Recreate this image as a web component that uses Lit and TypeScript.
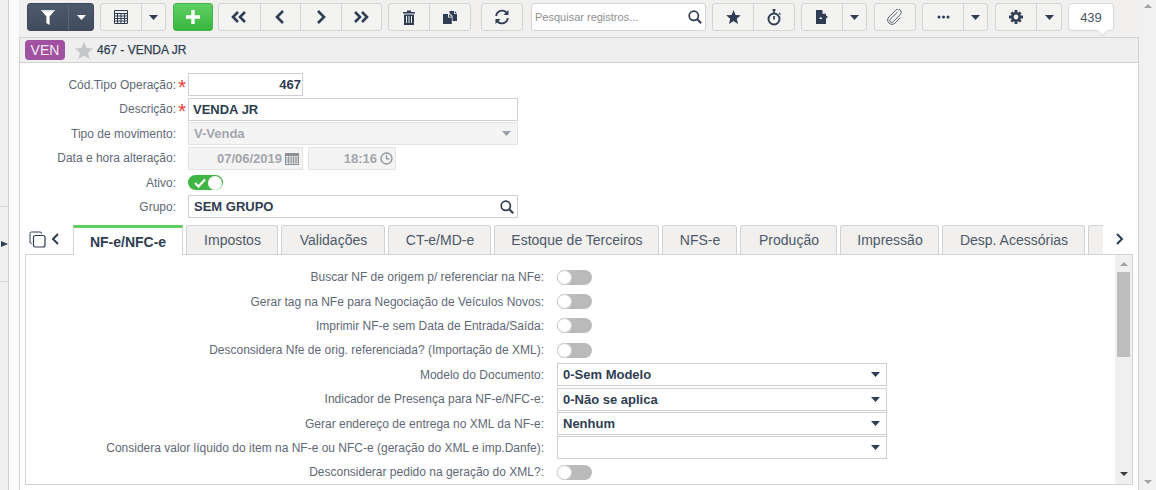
import { LitElement, html, css, svg } from "lit";
import { customElement } from "lit/decorators.js";

const INK = "#2f3d52";
const caret = html`<svg class="caret" width="9" height="5" viewBox="0 0 9 5"><path d="M0 0h9L4.5 5z" fill="currentColor"/></svg>`;
const ic = (w: number, h: number, vb: string, body: unknown) =>
  html`<svg width=${w} height=${h} viewBox=${vb} fill="none">${body}</svg>`;

const icons = {
  filter: ic(14, 15, "0 0 14 15", svg`<path d="M0 0h14L8.600 6.500V15L5.400 13V6.500z" fill="#fff"/><path d="M0 0h14l-1.500 1.800h-11z" fill="#dfe2e6"/>`),
  list: ic(14, 14, "0 0 14 14", svg`<path d="M.5.5h13v13H.5zM.5 3.500h13M.5 6h13M.5 8.500h13M.5 11h13M3.500 3.500v10M7 3.500v10M10.500 3.500v10" stroke="${INK}"/>`),
  plus: ic(14, 14, "0 0 14 14", svg`<path d="M5.300 0h3.400v5.300H14v3.400H8.700V14H5.300V8.700H0V5.300h5.300z" fill="#fff"/>`),
  first: ic(16, 12, "0 0 16 12", svg`<path d="M7 1 2 6l5 5M14 1 9 6l5 5" stroke="${INK}" stroke-width="2.600"/>`),
  prev: ic(10, 14, "0 0 10 14", svg`<path d="M8 1 2 7l6 6" stroke="${INK}" stroke-width="2.600"/>`),
  next: ic(10, 14, "0 0 10 14", svg`<path d="m2 1 6 6-6 6" stroke="${INK}" stroke-width="2.600"/>`),
  last: ic(16, 12, "0 0 16 12", svg`<path d="m2 1 5 5-5 5M9 1l5 5-5 5" stroke="${INK}" stroke-width="2.600"/>`),
  trash: ic(12, 15, "0 0 12 15", svg`<path d="M4 2V.500h4V2h4v1.500H0V2zM1 4.500h10V15H1z" fill="${INK}"/><path d="M3.500 6v7M6 6v7M8.500 6v7" stroke="#f3f3f3"/>`),
  copy: ic(14, 13, "0 0 14 13", svg`<path d="M6.500 0h4.500v3h3v7H9.500V5L6.500 2z" fill="${INK}"/><path d="M11.800 0 14 2.300h-2.200z" fill="${INK}"/><path d="M0 3h5v3.500h3.800V13H0z" fill="${INK}"/><path d="M6 3l2.800 2.700H6z" fill="${INK}"/>`),
  refresh: ic(16, 16, "0 0 16 16", svg`<path d="M2.200 7A6 6 0 0 1 12.500 3.500M13.800 9A6 6 0 0 1 3.500 12.500" stroke="${INK}" stroke-width="1.900"/><path d="M14.500 1v5h-5zM1.500 15v-5h5z" fill="${INK}"/>`),
  search: ic(14, 14, "0 0 14 14", svg`<circle cx="5.800" cy="5.800" r="4.600" stroke="${INK}" stroke-width="1.700"/><path d="m9.200 9.200 4 4" stroke="${INK}" stroke-width="2"/>`),
  star: ic(15, 14, "0 0 15 14", svg`<path d="m7.500 0 2 4.900 5.300.4-4 3.400 1.200 5.200-4.500-2.800L3 13.900l1.200-5.200-4-3.400 5.300-.4z" fill="${INK}"/>`),
  timer: ic(15, 17, "0 0 15 17", svg`<circle cx="7" cy="10" r="5.500" stroke="${INK}" stroke-width="1.900"/><path d="M5.500.900h3M7 1v3M7 7v3.500" stroke="${INK}" stroke-width="1.700"/><path d="m12 4 1.500 1.500" stroke="${INK}" stroke-width="1.300"/>`),
  doc: ic(12, 14, "0 0 12 14", svg`<path d="M0 0h6l4 4v1.500L12 7l-2 1.500V14H0z" fill="${INK}"/><path d="M3.500 7.500h2.500V9H3.500z" fill="#f3f3f3"/><path d="M6.500 0v3.700H10z" fill="#f3f3f3"/>`),
  clip: ic(16, 16, "0 0 16 16", svg`<path d="M10.500 3 3.300 10.200a1.900 1.900 0 0 0 2.700 2.700l7.500-7.600a3.200 3.200 0 0 0-4.500-4.500L1.900 8a4.300 4.300 0 0 0 6.100 6.100l5.500-5.500" stroke="#59626f" stroke-width="1"/>`),
  dots: ic(13, 4, "0 0 13 4", svg`<circle cx="2" cy="2" r="1.500" fill="${INK}"/><circle cx="6.500" cy="2" r="1.500" fill="${INK}"/><circle cx="11" cy="2" r="1.500" fill="${INK}"/>`),
  gear: ic(14, 14, "0 0 15 15", svg`<circle cx="7.500" cy="7.500" r="3.900" stroke="${INK}" stroke-width="2.700"/><path d="M6 0h3v3H6zM6 12h3v3H6zM0 6h3v3H0zM12 6h3v3h-3zM1.500 3.600l2-2 2 2-2 2zM9.500 3.600l2-2 2 2-2 2zM1.500 11.400l2-2 2 2-2 2zM9.500 11.400l2-2 2 2-2 2z" fill="${INK}"/>`),
  cal: ic(14, 13, "0 0 14 13", svg`<path d="M0 1h14v12H0z" fill="#8c9095"/><path d="M1 4h12v8H1z" fill="#f3f3f3"/><path d="M1 6h12M1 8h12M1 10h12M3.500 4v8M6 4v8M8.500 4v8M11 4v8" stroke="#8c9095" stroke-width=".8"/>`),
  clock: ic(13, 13, "0 0 13 13", svg`<circle cx="6.500" cy="6.500" r="5.500" stroke="#8c9095" stroke-width="1.300"/><path d="M6.500 3v3.800H9.500" stroke="#8c9095" stroke-width="1.200"/>`),
  check: ic(12, 10, "0 0 12 10", svg`<path d="m1 5 3.500 3.500L11 1.500" stroke="#fff" stroke-width="2.200"/>`),
  pages: ic(17, 17, "0 0 17 17", svg`<rect x="4.500" y="4.500" width="11.500" height="11.500" rx="2" stroke="${INK}" stroke-width="1.200"/><path d="M3 12.500H2.500A1.500 1.500 0 0 1 1 11V2.500A1.500 1.500 0 0 1 2.500 1H11a1.500 1.500 0 0 1 1.500 1.500V3" stroke="${INK}" stroke-width="1"/>`),
  bigStar: ic(18, 17, "0 0 18 17", svg`<path d="m9 0 2.500 6 6.500.5-5 4.300 1.600 6.200L9 13.700 3.400 17 5 10.800 0 6.500 6.500 6z" fill="#c4c5c7"/>`),
};

const tabs: [string, number][] = [
  ["Impostos", 92], ["Validações", 104], ["CT-e/MD-e", 103], ["Estoque de Terceiros", 165],
  ["NFS-e", 75], ["Produção", 97], ["Impressão", 99], ["Desp. Acessórias", 143],
];

type Row = { label: string; select?: string };
const rows: Row[] = [
  { label: "Buscar NF de origem p/ referenciar na NFe:" },
  { label: "Gerar tag na NFe para Negociação de Veículos Novos:" },
  { label: "Imprimir NF-e sem Data de Entrada/Saída:" },
  { label: "Desconsidera Nfe de orig. referenciada? (Importação de XML):" },
  { label: "Modelo do Documento:", select: "0-Sem Modelo" },
  { label: "Indicador de Presença para NF-e/NFC-e:", select: "0-Não se aplica" },
  { label: "Gerar endereço de entrega no XML da NF-e:", select: "Nenhum" },
  { label: "Considera valor líquido do item na NF-e ou NFC-e (geração do XML e imp.Danfe):", select: "" },
  { label: "Desconsiderar pedido na geração do XML?:" },
];

@customElement("app-root")
export class AppRoot extends LitElement {
  static styles = css`
    :host { display: block; width: 1156px; height: 490px; overflow: hidden; background: #fff;
      font-family: "Liberation Sans", Arial, sans-serif; font-size: 12px; color: #2f3d52; }
    .page { display: flex; height: 490px; }
    .rail { width: 8px; flex: none; border-right: 1px solid #d0d0d0; background: #f0f0f0; display: flex; flex-direction: column; box-sizing: content-box; }
    .rail-a { height: 206px; border-bottom: 1px solid #d9d9d9; }
    .rail-b { height: 74px; border-bottom: 1px solid #d9d9d9; display: flex; align-items: center; }
    .rail-b i { width: 0; height: 0; margin-left: 1px; border-left: 7px solid #2f3d52; border-top: 3.500px solid transparent; border-bottom: 3.500px solid transparent; }
    .gutter { width: 10px; flex: none; background: #fbfbfb; }
    .main { width: 1120px; flex: none; display: flex; flex-direction: column; background: #f1f0ee; }
    .outer-bar { flex: 1; background: #f1f1f1; display: flex; flex-direction: column; justify-content: space-between; align-items: center; padding: 4px 0 6px; }
    .up { width: 0; height: 0; border-left: 4px solid transparent; border-right: 4px solid transparent; border-bottom: 4px solid #a3a3a3; }
    .down { width: 0; height: 0; border-left: 4px solid transparent; border-right: 4px solid transparent; border-top: 4px solid #a3a3a3; }

    .toolbar { height: 37px; flex: none; display: flex; padding: 3px 0 0 8px; box-sizing: border-box; align-items: flex-start; position: relative; }
    .grp { display: flex; height: 28px; border: 1px solid #d4d4d4; border-radius: 3px; box-sizing: border-box; background: #f3f3f2; }
    .grp > span { display: flex; align-items: center; justify-content: center; border-left: 1px solid #d4d4d4; color: #2f3d52; box-sizing: border-box; }
    .grp > span:first-child { border-left: 0; }
    .dark { background: linear-gradient(#4d5a6c, #414d5f); border-color: #3d4859; }
    .dark > span { border-color: #59667a; color: #fff; }
    .green { background: linear-gradient(#5fcf63, #38b53d); border-color: #3fb544; }
    .search { width: 175px; height: 28px; margin-left: 8px; background: #fff; border: 1px solid #d4d4d4; border-radius: 3px; box-sizing: border-box; display: flex; align-items: center; justify-content: space-between; padding: 0 3px 0 3px; color: #8f8f8f; font-size: 11px; }
    .count { margin-left: 6px; width: 46px; height: 28px; background: #fff; border: 1px solid #d8d8d8; border-radius: 4px; box-sizing: border-box; display: flex; align-items: center; justify-content: center; font-size: 13px; color: #4a5566; position: relative; }
    .count::after { content: ""; position: absolute; left: 29px; bottom: -5px; width: 8px; height: 8px; background: #fff; border-right: 1px solid #d8d8d8; border-bottom: 1px solid #d8d8d8; transform: rotate(45deg) scale(.9); }
    .ml5 { margin-left: 5px; } .ml6 { margin-left: 6px; } .ml7 { margin-left: 7px; } .ml10 { margin-left: 10px; }

    .panel { flex: 1; min-height: 0; display: flex; flex-direction: column; border: 1px solid #d2d2d2; border-bottom: 0; background: #fff; }
    .title { height: 24px; flex: none; background: #efefef; border-bottom: 1px solid #d2d2d2; box-sizing: content-box; display: flex; align-items: center; padding-left: 5px; }
    .badge { width: 40px; height: 20px; border-radius: 4px; background: #a0519f; color: #f4e9f4; font-size: 14px; display: flex; align-items: center; justify-content: center; }
    .title svg { margin-left: 10px; }
    .title b { margin-left: 4px; font-size: 12px; font-weight: normal; -webkit-text-stroke: .25px #2f3d52; color: #2f3d52; }

    .form { display: flex; flex-direction: column; padding-top: 9.750px; height: 152.250px; flex: none; box-sizing: content-box; }
    .f { height: 24.400px; display: flex; align-items: center; flex: none; }
    .f label { width: 156px; text-align: right; color: #5f6875; font-size: 12px; white-space: nowrap; flex: none; }
    .req { width: 12px; height: 12px; flex: none; color: #e2432f; font-size: 21px; line-height: 16px; padding-left: 2px; box-sizing: border-box; overflow: visible; }
    .inp { height: 23px; box-sizing: border-box; border: 1px solid #d0d0d0; display: flex; align-items: center; font-weight: bold; font-size: 13px; color: #2f3d52; padding: 0 4px; justify-content: space-between; flex: none; }
    .w115 { width: 115px; justify-content: flex-end; padding-right: 1px; }
    .w330 { width: 330px; }
    .dis { background: #f4f4f4; border-color: #e3e3e3; color: #a2a6ac; }
    .pad4 { padding-left: 5px; }
    .pr6 { padding-right: 6px; }
    .pr3 { padding-right: 3px; }
    .date { gap: 3px; padding-right: 3px; }
    .time { width: 88px; margin-left: 5px; justify-content: flex-end; gap: 3px; padding-right: 2px; }
    .toggle { width: 35px; height: 15px; border-radius: 8px; background: #3fb544; box-sizing: border-box; position: relative; display: flex; align-items: center; padding-left: 6px; }
    .toggle::after { content: ""; position: absolute; right: 1px; top: .5px; width: 14px; height: 14px; border-radius: 50%; background: #fff; }
    .off { background: #bababa; }
    .off::after { right: auto; left: 0; top: 0; width: 15px; height: 15px; box-sizing: border-box; border: 1px solid #d0d0d0; }

    .tabbar { height: 29px; flex: none; display: flex; align-items: stretch; position: relative; }
    .tools { width: 53px; flex: none; display: flex; align-items: flex-start; padding: 6px 0 0 9px; box-sizing: border-box; gap: 5px; }
    .tools .chev { margin-top: 2px; }
    .tab { box-sizing: border-box; margin-right: 3px; border: 1px solid #d2d2d2; border-bottom: 0; border-radius: 3px 3px 0 0; background: #f1f0ee; display: flex; align-items: center; justify-content: center; font-size: 14px; color: #4d5868; flex: none; padding-left: 1px; }
    .tab.active { width: 110px; background: #fff; border: 0; border-left: 1px solid #d2d2d2; border-right: 1px solid #d2d2d2; border-top: 3px solid #5fcf63; border-radius: 0; color: #2f3d52; font-weight: bold; height: 30px; z-index: 1; padding: 1px 0 0; }
    .stub { width: 15px; margin: 0; border-right: 0; border-radius: 3px 0 0 0; }
    .right-chev { margin-left: 12px; margin-top: 8px; align-self: flex-start; }

    .box { margin-left: 5px; width: 1108px; height: 231px; box-sizing: border-box; border: 1px solid #d2d2d2; display: flex; flex: none; }
    .scroll { flex: 1; padding-top: 10px; box-sizing: border-box; min-width: 0; overflow: hidden; }
    .r { height: 24.400px; display: flex; align-items: center; }
    .r label { width: 518px; text-align: right; white-space: nowrap; flex: none; color: #5f6875; font-size: 12px; }
    .r .ctl { margin-left: 13px; flex: none; display: flex; align-items: center; }
    .sel { width: 330px; height: 23px; box-sizing: border-box; border: 1px solid #d0d0d0; font-weight: bold; font-size: 13px; color: #2f3d52; display: flex; align-items: center; justify-content: space-between; padding: 0 6px 0 5px; }
    .inner-bar { width: 17px; flex: none; background: #f0f0f0; display: flex; flex-direction: column; align-items: center; padding: 7px 0 8px; box-sizing: border-box; }
    .thumb { width: 13px; height: 85px; background: #bdbdbd; margin-top: 6px; margin-bottom: auto; }
    .inner-bar .down { border-top-color: #3a3a3a; }
    .caret { display: block; }
    .grey { color: #9aa0a8; }
  `;

  render() {
    return html`<div class="page">
      <div class="rail"><div class="rail-a"></div><div class="rail-b"><i></i></div></div>
      <div class="gutter"></div>
      <div class="main">
        <div class="toolbar">
          <div class="grp dark">${this.cell(40, icons.filter)}${this.cell(25, caret)}</div>
          <div class="grp ml6">${this.cell(40, icons.list)}${this.cell(24, caret)}</div>
          <div class="grp green ml7">${this.cell(38, icons.plus)}</div>
          <div class="grp ml5">${this.cell(40.5, icons.first)}${this.cell(40.5, icons.prev)}${this.cell(40.5, icons.next)}${this.cell(40.5, icons.last)}</div>
          <div class="grp ml6">${this.cell(40, icons.trash)}${this.cell(41, icons.copy)}</div>
          <div class="grp ml10">${this.cell(40, icons.refresh)}</div>
          <div class="search"><span>Pesquisar registros...</span>${icons.search}</div>
          <div class="grp ml6">${this.cell(40, icons.star)}${this.cell(41, icons.timer)}</div>
          <div class="grp ml6">${this.cell(40, icons.doc)}${this.cell(24, caret)}</div>
          <div class="grp ml7">${this.cell(40, icons.clip)}</div>
          <div class="grp ml6">${this.cell(40, icons.dots)}${this.cell(24, caret)}</div>
          <div class="grp ml7">${this.cell(40, icons.gear)}${this.cell(25, caret)}</div>
          <div class="count">439</div>
        </div>
        <div class="panel">
          <div class="title"><span class="badge">VEN</span>${icons.bigStar}<b>467 - VENDA JR</b></div>
          <div class="form">
            <div class="f"><label>Cód.Tipo Operação:</label><span class="req">*</span><div class="inp w115">467</div></div>
            <div class="f"><label>Descrição:</label><span class="req">*</span><div class="inp w330">VENDA JR</div></div>
            <div class="f"><label>Tipo de movimento:</label><span class="req"></span><div class="inp w330 dis pad4 pr6"><span>V-Venda</span><span class="grey">${caret}</span></div></div>
            <div class="f"><label>Data e hora alteração:</label><span class="req"></span><div class="inp dis w115 date">07/06/2019 ${icons.cal}</div><div class="inp dis time">18:16 ${icons.clock}</div></div>
            <div class="f"><label>Ativo:</label><span class="req"></span><div class="toggle">${icons.check}</div></div>
            <div class="f"><label>Grupo:</label><span class="req"></span><div class="inp w330 pad4 pr3"><span>SEM GRUPO</span>${icons.search}</div></div>
          </div>
          <div class="tabbar">
            <div class="tools">${icons.pages}<svg class="chev" width="9" height="12" viewBox="0 0 9 12" fill="none"><path d="M7 1 2 6l5 5" stroke="#2f3d52" stroke-width="2"/></svg></div>
            <div class="tab active">NF-e/NFC-e</div>
            ${tabs.map(([t, w]) => html`<div class="tab" style="width:${w}px">${t}</div>`)}
            <div class="tab stub"></div>
            <svg class="right-chev" width="9" height="12" viewBox="0 0 9 12" fill="none"><path d="m2 1 5 5-5 5" stroke="#2f3d52" stroke-width="2"/></svg>
          </div>
          <div class="box">
            <div class="scroll">
              ${rows.map((r) => html`<div class="r"><label>${r.label}</label><div class="ctl">
                ${r.select !== undefined ? html`<div class="sel"><span>${r.select}</span>${caret}</div>` : html`<div class="toggle off"></div>`}
              </div></div>`)}
            </div>
            <div class="inner-bar"><i class="up"></i><div class="thumb"></div><i class="down"></i></div>
          </div>
        </div>
      </div>
      <div class="outer-bar"><i class="up"></i><i class="down"></i></div>
    </div>`;
  }

  private cell(w: number, content: unknown) {
    return html`<span style="width:${w}px">${content}</span>`;
  }
}
